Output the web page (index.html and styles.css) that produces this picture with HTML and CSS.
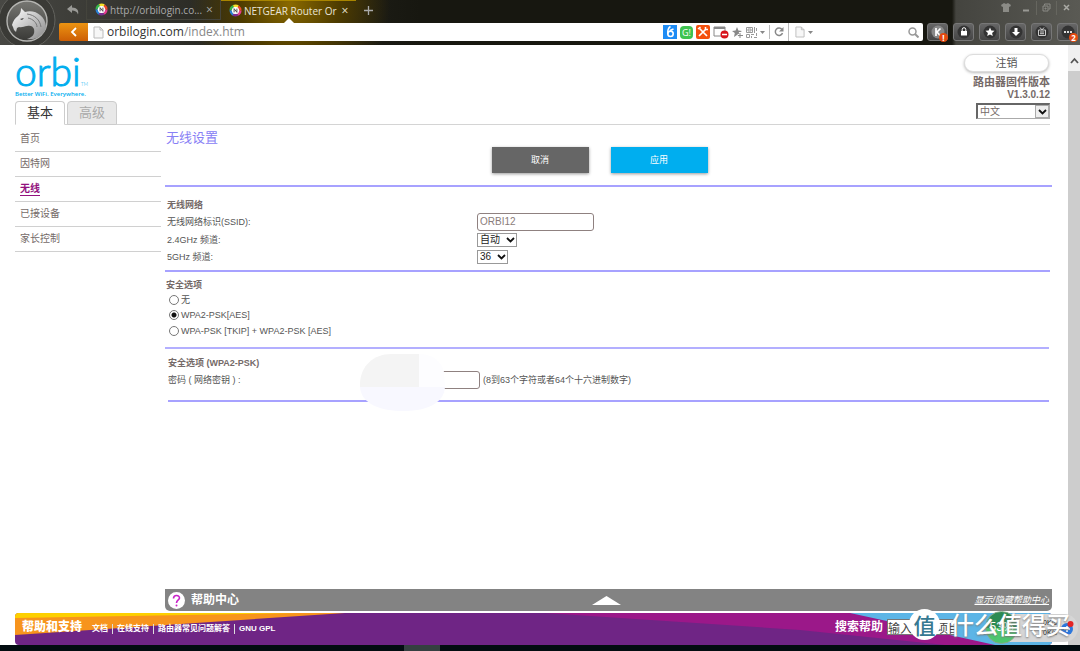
FILE: index.html
```html
<!DOCTYPE html>
<html lang="zh-CN">
<head>
<meta charset="utf-8">
<title>NETGEAR Router Orbi</title>
<link rel="stylesheet" href="styles.css">
</head>
<body>
<svg width="0" height="0" class="defs" aria-hidden="true">
  <defs>
    <symbol id="favicon" viewBox="0 0 14 14">
      <circle cx="7" cy="7" r="4.6" fill="#fff"/>
      <g fill="none" stroke-width="3" stroke-dasharray="5.1 28">
        <circle cx="7" cy="7" r="5" stroke="#e23b8e"/>
        <circle cx="7" cy="7" r="5" stroke="#7a2b90" stroke-dashoffset="-5.2"/>
        <circle cx="7" cy="7" r="5" stroke="#2a7fd4" stroke-dashoffset="-10.4"/>
        <circle cx="7" cy="7" r="5" stroke="#35b34a" stroke-dashoffset="-15.6"/>
        <circle cx="7" cy="7" r="5" stroke="#f7e12a" stroke-dashoffset="-20.8"/>
        <circle cx="7" cy="7" r="5" stroke="#f04b2c" stroke-dashoffset="-26"/>
      </g>
      <circle cx="7" cy="7" r="3.8" fill="#fff"/>
      <path d="M5.500 9V5l3 4V5" fill="none" stroke="#444" stroke-width="1"/>
    </symbol>
    <symbol id="sheet" viewBox="0 0 11 13">
      <path d="M1 1h6l3 3v8H1z" fill="#f7f7f7" stroke="#bbb"/><path d="M7 1v3h3" fill="none" stroke="#bbb"/>
    </symbol>
  </defs>
</svg>

<header class="browser">
  <div class="brand">
    <svg viewBox="0 0 58 45" width="58" height="45" aria-hidden="true">
      <defs>
        <linearGradient id="disc" x1="0" y1="0" x2="0" y2="1"><stop offset="0" stop-color="#777773"/><stop offset="1" stop-color="#393936"/></linearGradient>
        <linearGradient id="mane" x1="0" y1="0" x2="1" y2="1"><stop offset="0" stop-color="#fff"/><stop offset="1" stop-color="#888"/></linearGradient>
      </defs>
      <circle cx="27" cy="20" r="28" fill="#3a3a36" stroke="#62625d"/>
      <circle cx="27" cy="21" r="20" fill="url(#disc)" stroke="#b5b5b2" stroke-width="1.4"/>
      <path d="M12 25c1-4 3-7 6-9 2-2 3-4 3-8l4 4c10-3 20 4 21 14 0 4-2 7-5 9-4 4-9 5-14 4 6-2 8-5 7-10-1-3-4-4-7-3-3 0-5 2-8 1l-2 1-1 4-2-2-1-3z" fill="url(#mane)"/>
      <path d="M27 14c8 1 13 6 14 13M28 18c5 1 9 5 9 9" fill="none" stroke="#777" stroke-width="1"/>
      <path d="M20 19l4-1-2 2z" fill="#333"/>
    </svg>
  </div>
  <div class="chrome">
    <div class="tabstrip">
      <button class="undo" aria-label="恢复标签"><svg viewBox="0 0 12 10" width="12" height="10"><path d="M5 0L0 4l5 4V5.500c3 0 5 1 6 4 1-4-1-7-6-7z" fill="#9a9a96"/></svg></button>
      <div class="btab"><svg width="13" height="13"><use href="#favicon"/></svg><span>http://orbilogin.co...</span><button aria-label="关闭标签">×</button></div>
      <div class="btab active"><svg width="13" height="13"><use href="#favicon"/></svg><span>NETGEAR Router Or</span><button aria-label="关闭标签">×</button></div>
      <button class="newtab" aria-label="新标签"><svg viewBox="0 0 9 9" width="9" height="9"><path d="M4.500 0v9M0 4.500h9" stroke="#aaa" stroke-width="1.300"/></svg></button>
      <div class="winctl">
        <button aria-label="皮肤"><svg viewBox="0 0 10 9" width="10" height="9"><path d="M3 0l2 1 2-1 3 2-1 2-1-.5V9H2V3.500L1 4 0 2z" fill="#8b8b86"/></svg></button>
        <button aria-label="最小化"><svg viewBox="0 0 9 9" width="9" height="9"><path d="M1 7.500h6" stroke="#999994" stroke-width="2"/></svg></button>
        <button aria-label="还原"><svg viewBox="0 0 9 9" width="9" height="9"><path d="M2.500 2.500V1H8v5H6.500M1 3h5v5H1zM3 5h1v1H3z" fill="none" stroke="#8b8b86"/></svg></button>
        <button aria-label="关闭"><svg viewBox="0 0 9 9" width="9" height="9"><path d="M2 2l5 5M7 2L2 7" stroke="#aaaaa5" stroke-width="1.500"/></svg></button>
      </div>
    </div>
    <div class="addressrow">
      <button class="back" aria-label="后退"><svg viewBox="0 0 8 10" width="8" height="10"><path d="M6 1L2 5l4 4" fill="none" stroke="#fff" stroke-width="1.800"/></svg></button>
      <div class="address">
        <svg width="11" height="13"><use href="#sheet"/></svg>
        <span class="url">orbilogin.com<i>/index.htm</i></span>
        <div class="tools">
          <svg viewBox="0 0 14 14" width="14" height="14"><path fill="#1e8cf5" d="M0 0h14v14H0z"/><circle cx="7.500" cy="8.800" r="2.700" fill="none" stroke="#fff" stroke-width="1.600"/><path d="M7.500 1.500C5 3 4.500 6 4.800 9M7 5.500l3.500-1.500" fill="none" stroke="#fff" stroke-width="1.500"/></svg>
          <span class="gbadge">G!</span>
          <svg viewBox="0 0 14 14" width="14" height="14"><rect width="14" height="14" rx="2" fill="#f4500c"/><path d="M3.500 3.500l7.500 7.500M10 4l-7 7" stroke="#fff" stroke-width="1.700"/><path d="M2 4l2.500-2M9.500 2v2.500H12" fill="none" stroke="#fff" stroke-width="1.500"/></svg>
          <svg viewBox="0 0 16 13" width="16" height="13"><path d="M1 1h11v9H1z" fill="#fff" stroke="#888"/><path d="M1 2h11" stroke="#888" stroke-width="2"/><circle cx="11.500" cy="8.500" r="4" fill="#d8141c"/><path d="M9 8.500h5" stroke="#fff" stroke-width="1.500"/></svg>
          <svg viewBox="0 0 11 11" width="11" height="11"><path d="M5 0l1.400 3.500L10 4 7 6l1 4-3-2-3 2 .8-4L0 4l3.600-.5z" fill="#888"/><path d="M8 5v6M5.500 8H11" stroke="#fff" stroke-width="2.200"/><path d="M8 6v5M6 8.500h5" stroke="#888"/></svg>
          <svg viewBox="0 0 11 11" width="11" height="11"><path d="M.5.5h6v5h-6zM2 2h3v2H2zM.5 7.500h3v3h-3zM8.500 0v6M10.500 1v3M5 7.500h3M5.500 9v2M8 10.500h3M10.500 6v3" fill="none" stroke="#999"/></svg>
          <svg viewBox="0 0 5 3" width="5" height="3"><path d="M0 0h5L2.500 3z" fill="#888"/></svg>
          <span class="sep"></span>
          <svg viewBox="0 0 10 10" width="10" height="10"><path d="M8 2.500A3.700 3.700 0 1 0 8.500 6" fill="none" stroke="#888" stroke-width="1.500"/><path d="M9.500 0v4.500H5z" fill="#888"/></svg>
        </div>
      </div>
      <div class="search">
        <svg width="10" height="12"><use href="#sheet"/></svg>
        <svg viewBox="0 0 5 3" width="5" height="3"><path d="M0 0h5L2.500 3z" fill="#888"/></svg>
        <input type="text" aria-label="搜索">
        <svg viewBox="0 0 11 11" width="11" height="11"><circle cx="4.500" cy="4.500" r="3.500" fill="none" stroke="#999" stroke-width="1.500"/><path d="M7 7l3.500 3.500" stroke="#999" stroke-width="2"/></svg>
      </div>
      <div class="plugins">
        <button aria-label="K"><svg viewBox="0 0 14 14" width="14" height="14"><circle cx="7" cy="7" r="6.500" fill="#888"/><path d="M5 3v8M9.500 3.500L6 7l3.500 4" fill="none" stroke="#fff" stroke-width="1.700"/></svg><b class="dot">!</b></button>
        <button aria-label="锁"><svg viewBox="0 0 14 14" width="14" height="14"><circle cx="7" cy="7" r="6.500" fill="#333"/><path d="M4 6h6v4.500H4z" fill="#fff"/><path d="M5.200 6V4.500a1.800 1.800 0 0 1 3.600 0V6" fill="none" stroke="#fff"/></svg></button>
        <button aria-label="收藏"><svg viewBox="0 0 14 14" width="14" height="14"><circle cx="7" cy="7" r="6.500" fill="#333"/><path d="M7 2.500l1.300 3 3.200.3-2.400 2.100.7 3.200L7 9.400l-2.800 1.700.7-3.200-2.400-2.100 3.200-.3z" fill="#fff"/></svg></button>
        <button aria-label="下载"><svg viewBox="0 0 14 14" width="14" height="14"><circle cx="7" cy="7" r="6.500" fill="#333"/><path d="M5.500 3h3v4H11l-4 4-4-4h2.500z" fill="#fff"/></svg></button>
        <button aria-label="视频"><svg viewBox="0 0 14 14" width="14" height="14"><circle cx="7" cy="7" r="6.500" fill="#333"/><path d="M3.500 5h7v5.500h-7zM5 2.500L7 5l2-2.500M5 7h4M5 8.700h4" fill="none" stroke="#ccc"/></svg></button>
        <button aria-label="更多"><svg viewBox="0 0 14 14" width="14" height="14"><circle cx="7" cy="7" r="6.500" fill="#333"/><path d="M3 6h2v2H3zM6 6h2v2H6zM9 6h2v2H9z" fill="#ddd"/></svg><b class="dot">2</b></button>
      </div>
    </div>
  </div>
</header>

<div class="viewport">
  <div class="page">
    <div class="masthead">
      <div class="left">
        <div class="orbi">orbi<small>TM</small></div>
        <div class="slogan">Better WiFi. Everywhere.</div>
        <nav class="tabs"><button class="on">基本</button><button>高级</button></nav>
      </div>
      <div class="account">
        <button class="logout">注销</button>
        <div class="fw">路由器固件版本</div>
        <div class="ver">V1.3.0.12</div>
        <div class="pick lang"><select aria-label="语言"><option>中文</option></select><span><svg viewBox="0 0 9 6" width="9" height="6"><path d="M1 1l3.500 3.500L8 1" fill="none" stroke="#111" stroke-width="1.800"/></svg></span></div>
      </div>
    </div>

    <div class="columns">
      <nav class="side">
        <a href="#">首页</a><a href="#">因特网</a><a href="#" class="on"><span>无线</span></a><a href="#">已接设备</a><a href="#">家长控制</a>
      </nav>
      <main>
        <form>
          <h1>无线设置</h1>
          <div class="actions"><button type="button" class="cancel">取消</button><button type="button" class="apply">应用</button></div>
          <section class="network">
            <h2>无线网络</h2>
            <div class="row tall"><label for="ssid">无线网络标识(SSID):</label><input id="ssid" type="text" value="ORBI12"></div>
            <div class="row"><label for="ch24">2.4GHz 频道:</label><div class="pick"><select id="ch24" class="w-auto"><option>自动</option></select><span><svg viewBox="0 0 9 6" width="9" height="6"><path d="M1 1l3.500 3.500L8 1" fill="none" stroke="#111" stroke-width="1.800"/></svg></span></div></div>
            <div class="row"><label for="ch5">5GHz 频道:</label><div class="pick"><select id="ch5" class="w-num"><option>36</option></select><span><svg viewBox="0 0 9 6" width="9" height="6"><path d="M1 1l3.500 3.500L8 1" fill="none" stroke="#111" stroke-width="1.800"/></svg></span></div></div>
          </section>
          <section class="security">
            <h2>安全选项</h2>
            <label class="radio"><input type="radio" name="sec"><span>无</span></label>
            <label class="radio"><input type="radio" name="sec" checked><span>WPA2-PSK[AES]</span></label>
            <label class="radio"><input type="radio" name="sec"><span>WPA-PSK [TKIP] + WPA2-PSK [AES]</span></label>
          </section>
          <section class="password">
            <h2>安全选项 (WPA2-PSK)</h2>
            <div class="row tall keyrow"><label for="key">密码 ( 网络密钥 ) :</label><div class="keybox"><input id="key" type="text"><span>(8到63个字符或者64个十六进制数字)</span><svg class="smudge" viewBox="0 0 85 57" width="85" height="57" aria-hidden="true"><path d="M0 33C-1 14 12 0 31 0h28v33z" fill="#f4f4f4"/><path d="M59 0c14 0 23 8 25 18l1 15H59z" fill="#fdfdff"/><path d="M0 33h85c-1 14-14 24-42 24S1 47 0 33z" fill="#f8f8ff"/></svg></div></div>
          </section>
        </form>
        <div class="help">
          <svg viewBox="0 0 17 17" width="17" height="17"><circle cx="8.500" cy="8.500" r="8.500" fill="#fff"/><path d="M5.500 6.500c0-4 6-4 6-.5 0 2-3 2-3 5" fill="none" stroke="#c822c8" stroke-width="1.600"/><circle cx="8.500" cy="13.500" r="1" fill="#c822c8"/></svg>
          <strong>帮助中心</strong>
          <svg class="up" viewBox="0 0 29 9" width="29" height="9"><path d="M14.500 0L29 9H0z" fill="#fff"/></svg>
          <a href="#">显示/隐藏帮助中心</a>
        </div>
      </main>
    </div>

    <footer>
      <svg class="ribbon" viewBox="0 0 1037 32" preserveAspectRatio="none" aria-hidden="true">
        <path fill="#6f2585" d="M0 0h1037v32H0z"/><path fill="#f7941d" d="M0 0h330L0 22z"/><path fill="#fdd000" d="M0 0h285L0 5z"/>
        <path fill="#9b1889" d="M530 0h310l150 32h-60L785 17z"/><path fill="#5cb5e6" d="M835 0h202v32h-57L890 12z"/>
      </svg>
      <strong>帮助和支持</strong>
      <div class="links"><a href="#">文档</a><a href="#">在线支持</a><a href="#">路由器常见问题解答</a><a href="#">GNU GPL</a></div>
      <label for="find">搜索帮助</label><input id="find" type="text" value="输入搜索项目">
    </footer>
  </div>
  <div class="scroll"><svg viewBox="0 0 9 7" width="9" height="7"><path d="M1 6l3.500-4L8 6" fill="none" stroke="#555" stroke-width="1.800"/></svg><div></div></div>
</div>

<div class="taskbar"><i></i><span>19:57</span></div>

<div class="widget">
  <div class="rates"><span>0K/s</span><span>0K/s</span></div>
  <svg viewBox="0 0 14 14" width="14" height="14"><circle cx="7" cy="8" r="6" fill="#2c78dd"/><path d="M4 8h6M7 5v6" stroke="#fff" stroke-width="1.500"/><circle cx="10.500" cy="3" r="3" fill="#e42525"/></svg>
  <div class="ball">53%</div>
</div>
<div class="mark"><span class="disc">值</span><span>什么值得买</span></div>
</body>
</html>
```
FILE: styles.css
```css
* { box-sizing: border-box; }
body { margin: 0; height: 100vh; display: flex; flex-direction: column; position: relative; overflow: hidden; background: #fff; font: 9px/12px "Liberation Sans", "Noto Sans CJK SC", sans-serif; color: #555; }
button, input, select { font: inherit; color: inherit; margin: 0; padding: 0; border: 0; background: none; }
button { display: flex; align-items: center; justify-content: center; }
a { color: inherit; text-decoration: none; }
svg { display: block; flex: none; }
.defs { position: absolute; }

.browser { display: flex; height: 45px; flex: none; background: radial-gradient(circle at 290px 4px, #8a6900 0, #4d3b00 50px, transparent 100px), linear-gradient(90deg, #484844 0, #282822 220px, #171710 420px, #171710 952px, #44443f 956px, #5a5a54 100%); font-family: "Open Sans", sans-serif; }
.brand { width: 59px; overflow: hidden; }
.chrome { flex: 1; min-width: 0; }
.tabstrip { display: flex; height: 20px; font-size: 10px; }
.undo { width: 27px; }
.btab { display: flex; align-items: center; gap: 2px; width: 135px; padding: 0 5px 0 8px; color: #aaa; border: solid #44443c; border-width: 0 1px 1px; }
.btab span { flex: 1; white-space: nowrap; }
.btab button { width: 12px; font-size: 12px; }
.btab.active { border: 0; color: #e8e4d8; border-top: 1px solid #a88500; position: relative; }
.btab.active::after { content: ""; position: absolute; left: 62px; top: 17px; border: solid transparent; border-width: 0 6px 6px; border-bottom-color: #fff; }
.newtab { width: 25px; }
.winctl { display: flex; align-items: center; margin-left: auto; height: 15px; padding-right: 4px; }
.winctl button { width: 20px; height: 14px; border-left: 1px solid #66665f; }
.winctl button:first-child, .winctl button:nth-child(2) { border: 0; }
.addressrow { display: flex; margin-top: 3px; height: 18px; border-radius: 2px; }
.back { width: 29px; background: linear-gradient(#ec9412, #cc5e05); border-radius: 2px 0 0 2px; }
.address { flex: 1; display: flex; align-items: center; background: #fff; padding: 0 4px 0 5px; gap: 3px; font-size: 12px; color: #333; }
.url i { font-style: normal; color: #888; }
.tools { display: flex; align-items: center; gap: 3px; margin-left: auto; }
.gbadge { width: 13px; height: 13px; border-radius: 4px; background: #3fc34f; color: #fff; font-size: 9px; line-height: 13px; text-align: center; }
.sep { width: 1px; height: 14px; background: #bbb; margin: 0 1px; }
.search { width: 135px; display: flex; align-items: center; gap: 3px; padding: 0 4px 0 6px; background: #fff; border-left: 1px solid #bbb; border-radius: 0 2px 2px 0; }
.search input { flex: 1; min-width: 0; }
.plugins { display: flex; gap: 5px; padding: 0 2px 0 4px; }
.plugins button { width: 21px; height: 18px; border: 1px solid #777; border-radius: 3px; background: linear-gradient(#666, #444); position: relative; }
.dot { position: absolute; right: -1px; bottom: -2px; width: 9px; height: 9px; border-radius: 50%; background: #e3490f; color: #fff; font-size: 8px; line-height: 9px; }

.viewport { flex: 1; min-height: 0; display: flex; }
.page { flex: 1; min-width: 0; display: flex; flex-direction: column; padding-left: 15px; }
.scroll { width: 12px; background: #f0f0f0; display: flex; flex-direction: column; align-items: center; padding-top: 12px; gap: 7px; }
.scroll div { flex: 1; width: 100%; background: #cdcdcd; }
.masthead { display: flex; justify-content: space-between; height: 80px; margin-right: 18px; padding-top: 9px; border-bottom: 1px solid #d4d4d4; }
.left { display: flex; flex-direction: column; }
.orbi { font: 300 39px/34px Lato, sans-serif; color: #00aeef; height: 36px; -webkit-text-stroke: 1px #00aeef; white-space: nowrap; }
.orbi small { font-size: 5px; -webkit-text-stroke: 0; }
.slogan { font: 600 6px/8px "Open Sans", sans-serif; color: #00aeef; white-space: nowrap; }
.tabs { display: flex; gap: 2px; margin-top: auto; margin-bottom: -1px; }
.tabs button { width: 50px; height: 24px; border: 1px solid #ccc; border-radius: 4px 4px 0 0; background: #e8e8e8; color: #aaa; font-size: 13px; }
.tabs .on { background: #fff; color: #333; border-bottom-color: #fff; }
.account { display: flex; flex-direction: column; align-items: flex-end; color: #756a68; font-weight: bold; }
.logout { width: 85px; height: 18px; border: 1px solid #ddd; border-radius: 9px; box-shadow: 0 1px 3px #bbb; background: #fff; font-size: 11px; font-weight: normal; margin-right: 1px; color: #555; margin-bottom: 3px; }
.fw { font-size: 11px; line-height: 14px; }
.ver { font-size: 10px; line-height: 12px; }
.pick { position: relative; display: flex; justify-self: start; }
.pick span { position: absolute; right: 2px; top: 0; bottom: 0; display: flex; align-items: center; pointer-events: none; }
.pick select { appearance: none; height: 14px; border: 1px solid #999; padding-left: 2px; color: #222; font-size: 10px; line-height: 12px; background: #fff; }
.pick .w-auto { width: 40px; }
.pick .w-num { width: 31px; }
.lang { margin-top: 2px; }
.lang select { width: 74px; height: 16px; border: 1px solid #aaa; border-top: 2px solid #666; border-left: 2px solid #666; color: #756a68; font-weight: normal; }
.lang span { right: 1px; top: 2px; bottom: 1px; width: 14px; justify-content: center; border: 1px solid #aaa; background: #eee; }

.columns { flex: 1; min-height: 0; display: flex; gap: 4px; margin-right: 16px; }
.side { width: 146px; padding-top: 2px; }
.side a { display: flex; align-items: center; height: 25px; border-bottom: 1px solid #d0d0d0; padding-left: 5px; font-size: 10px; color: #756a68; }
.side .on { color: #93117e; font-weight: bold; }
.side .on span { border-bottom: 1px solid #93117e; }
main { flex: 1; display: flex; flex-direction: column; }
h1 { margin: 0; padding: 4px 0 0 1px; font: 13px/18px "Liberation Sans", "Noto Sans CJK SC", sans-serif; color: #8880f5; }
h2 { margin: 0; font-size: 9px; line-height: 14px; color: #756a68; }
.actions { display: flex; justify-content: center; gap: 22px; padding: 0 18px 12px 0; border-bottom: 2px solid #a7a2ff; }
.actions button { width: 97px; height: 26px; color: #fff; box-shadow: 0 1px 3px #999; }
.cancel { background: #666; }
.apply { background: #00aeef; }
.network { padding: 11px 0 5px 2px; margin: 0 2px 0 0; border-bottom: 2px solid #a7a2ff; }
.row { display: grid; grid-template-columns: 310px 1fr; align-items: center; height: 17px; }
.row.tall { height: 19px; }
.row input { width: 117px; height: 18px; border: 1px solid #8f8180; border-radius: 3px; padding-left: 2px; font-size: 10px; color: #8a7c7a; background: #fff; }
.security { padding: 7px 0 8px 1px; margin: 0 3px 0 0; border-bottom: 2px solid #b3afff; }
.security h2 { line-height: 13px; }
.radio { display: flex; align-items: center; gap: 2px; height: 16px; padding-left: 3px; }
.radio:nth-of-type(1) { height: 15px; }
.radio input { appearance: none; width: 10px; height: 10px; border: 1px solid #777; border-radius: 50%; background: #fff; }
.radio input:checked { background: radial-gradient(circle, #111 0 2px, #fff 3px); }
.password { padding: 7px 0 11px; margin: 0 3px 0 3px; border-bottom: 2px solid #a7a2ff; }
.keyrow { grid-template-columns: 195px 1fr; }
.keybox { position: relative; display: flex; align-items: center; gap: 3px; }
.keybox .smudge { position: absolute; left: -3px; top: -17px; }
.help { margin-top: auto; height: 22px; display: flex; align-items: center; position: relative; padding: 0 3px; gap: 6px; background: #838383; color: #fff; border-radius: 0 0 5px 5px; }
.help strong { font-size: 12px; }
.help .up { margin: 0 auto; }
.help a { font-style: italic; text-decoration: underline; }
footer { position: relative; display: flex; align-items: center; flex: none; height: 32px; margin: 2px 16px 0 0; padding: 0 95px 4px 7px; border-radius: 4px; overflow: hidden; color: #fff; font-weight: bold; }
.ribbon { position: absolute; left: 0; top: 0; width: 100%; height: 100%; z-index: -1; }
footer strong, footer label { font-size: 12px; }
.links { display: flex; margin: 3px auto 0 6px; font-size: 8px; line-height: 10px; }
.links a { padding: 0 4px; border-left: 1px solid #ddd; }
.links a:first-child { border: 0; }
footer input { width: 70px; height: 16px; margin-left: 4px; background: #fff; border: 1px solid #777; color: #444; font-size: 12px; font-weight: normal; }
.taskbar { height: 6px; flex: none; background: #020c10; position: relative; overflow: hidden; color: #fff; }
.taskbar i { position: absolute; left: 404px; top: 0; width: 36px; height: 6px; background: #354041; }
.taskbar span { position: absolute; right: 55px; top: 3px; }

.widget { position: absolute; right: 2px; bottom: 9px; width: 92px; height: 28px; border-radius: 14px; background: #d6d6d6; display: flex; align-items: center; justify-content: flex-end; gap: 3px; padding-right: 4px; }
.rates { display: flex; flex-direction: column; font-size: 7px; line-height: 10px; color: #222; }
.ball { position: absolute; left: -1px; bottom: -2px; width: 33px; height: 33px; border-radius: 50%; border: 1px solid #8a8; background: linear-gradient(#2b8b53 50%, #4cc76e 52%); color: #fff; font-size: 12px; line-height: 31px; text-align: center; }
.mark { position: absolute; right: 10px; bottom: 11px; display: flex; align-items: center; gap: 10px; color: #fff; font: 500 24px/32px "Noto Sans CJK SC", sans-serif; text-shadow: 0 1px 2px #777; white-space: nowrap; }
.mark .disc { width: 31px; height: 31px; border-radius: 50%; background: #fff; color: #367992; font-size: 22px; line-height: 30px; text-align: center; text-shadow: none; }
```
